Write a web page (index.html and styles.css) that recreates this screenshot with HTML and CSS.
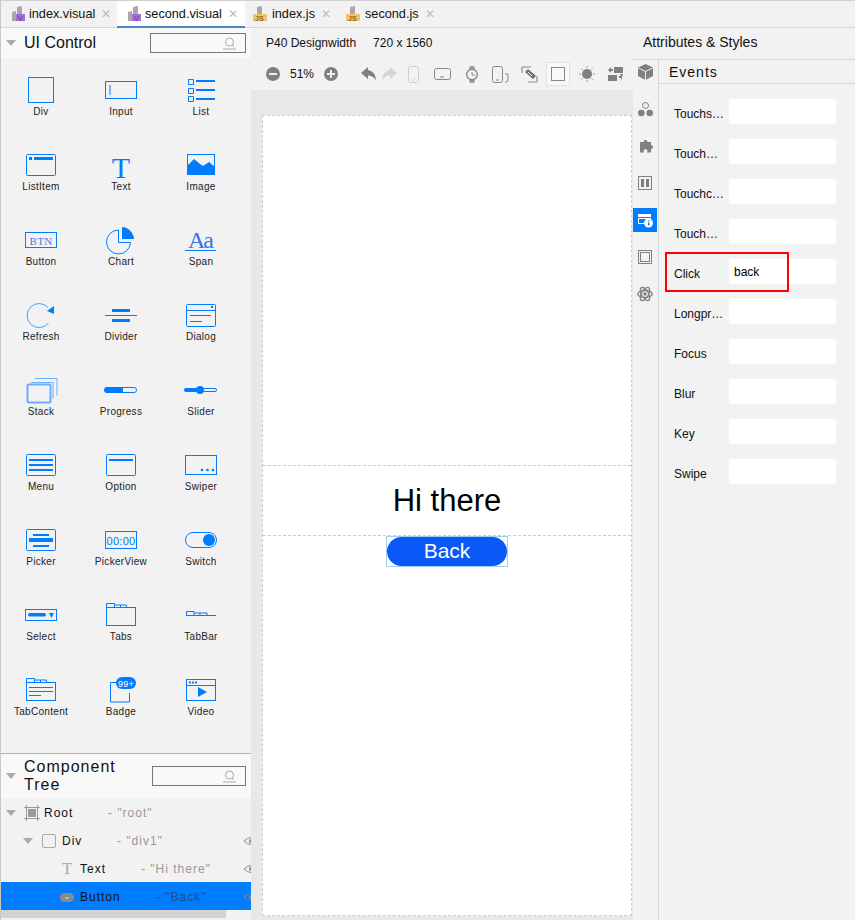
FILE: index.html
```html
<!DOCTYPE html>
<html lang="en">
<head>
  <meta charset="UTF-8" />
  <title>second.visual</title>
  <link rel="stylesheet" href="styles.css">
</head>
<body>

  <div class="tabs">
    <div class="tab tab-first">
      <svg class="file-icon" width="14" height="16" viewBox="0 0 14 16"><path d="M0 6l4-1v10H0zM5 1l5-1v8H5z" fill="#a8a8a8"/><rect y="8" x="4" width="9" height="7" fill="#a070d8"/><text x="6" y="14.500" class="file-v">V</text></svg>
      <span class="tab-name">index.visual</span><span class="tab-x">✕</span>
    </div>
    <div class="tab tab-active">
      <svg class="file-icon" width="14" height="16" viewBox="0 0 14 16"><path d="M0 6l4-1v10H0zM5 1l5-1v8H5z" fill="#a8a8a8"/><rect y="8" x="4" width="9" height="7" fill="#a070d8"/><text x="6" y="14.500" class="file-v">V</text></svg>
      <span class="tab-name">second.visual</span><span class="tab-x">✕</span>
    </div>
    <div class="tab tab-js">
      <svg class="file-icon" width="14" height="16" viewBox="0 0 14 16"><path d="M4 1l5-1v8H4z" fill="#a8a8a8"/><rect y="8" width="14" height="7" fill="#f0c46c"/><text x="2" y="14.500" class="file-js">JS</text></svg>
      <span class="tab-name">index.js</span><span class="tab-x">✕</span>
    </div>
    <div class="tab tab-js">
      <svg class="file-icon" width="14" height="16" viewBox="0 0 14 16"><path d="M4 1l5-1v8H4z" fill="#a8a8a8"/><rect y="8" width="14" height="7" fill="#f0c46c"/><text x="2" y="14.500" class="file-js">JS</text></svg>
      <span class="tab-name">second.js</span><span class="tab-x">✕</span>
    </div>
  </div>

  <div class="main">

    <!-- left side -->
    <div class="left">
      <div class="panel-head head-control">
        <span class="tri"></span>
        <span class="panel-title">UI Control</span>
        <div class="search search-wide">
          <svg width="14" height="13" viewBox="0 0 14 13"><circle cx="7.500" cy="5" r="4" fill="none" stroke="#aaa"/><path d="M10 8l2 2M1 12h13" stroke="#aaa"/></svg>
        </div>
      </div>

      <div class="palette">
        <div class="item">
          <svg viewBox="0 0 40 32"><rect x="7.500" y="3.500" width="25" height="25" class="ln"/></svg>
          <span>Div</span>
        </div>
        <div class="item">
          <svg viewBox="0 0 40 32"><rect x="4.500" y="7.500" width="31" height="17" class="ln"/><path d="M9 11v10" class="ln"/></svg>
          <span>Input</span>
        </div>
        <div class="item">
          <svg viewBox="0 0 40 32"><path d="M7.500 5.500h5v5h-5zM7.500 14.500h5v5h-5zM7.500 22.500h5v5h-5z" class="ln"/><path d="M15 7h19M15 16h19M15 25h19" class="ln2"/></svg>
          <span>List</span>
        </div>

        <div class="item">
          <svg viewBox="0 0 40 32"><rect x="5.500" y="5.500" width="29" height="21" rx="1" class="ln"/><path d="M8 8h3v3H8zM13 8h19v3H13z" class="fl"/></svg>
          <span>ListItem</span>
        </div>
        <div class="item">
          <svg viewBox="0 0 40 32"><text x="20" y="29" class="ic-t">T</text></svg>
          <span>Text</span>
        </div>
        <div class="item">
          <svg viewBox="0 0 40 32"><rect x="6.500" y="5.500" width="27" height="20" class="ln"/><path d="M6 25V17l7-7 6 5 3 2 6-4 6 5v7z" class="fl"/></svg>
          <span>Image</span>
        </div>

        <div class="item">
          <svg viewBox="0 0 40 32"><rect x="4.500" y="8.500" width="31" height="15" class="ln"/><text x="20" y="20.500" class="ic-btn">BTN</text></svg>
          <span>Button</span>
        </div>
        <div class="item">
          <svg viewBox="0 0 40 32"><path d="M17.500 6a12 12 0 1 0 12 12.500H17.500z" class="ln"/><path d="M21 3a13 13 0 0 1 12 12H21z" class="fl"/></svg>
          <span>Chart</span>
        </div>
        <div class="item">
          <svg viewBox="0 0 40 32"><text x="19" y="24" class="ic-aa">Aa</text><path d="M4 26.500h31" class="ln"/></svg>
          <span>Span</span>
        </div>

        <div class="item">
          <svg viewBox="0 0 40 32"><path d="M27 8.500A12 12 0 1 0 27.500 24" class="ln soft"/><path d="M26 12l7-5v8z" class="fl"/></svg>
          <span>Refresh</span>
        </div>
        <div class="item">
          <svg viewBox="0 0 40 32"><path d="M4 16.500h32" class="ln"/><path d="M11 10h18v3H11zM11 20h18v3H11z" class="fl"/></svg>
          <span>Divider</span>
        </div>
        <div class="item">
          <svg viewBox="0 0 40 32"><rect x="5.500" y="5.500" width="29" height="22" rx="1" class="ln"/><path d="M5 11.500h30M9 16.500h21M9 22.500h12" class="ln"/><rect x="30" y="7" width="2" height="2" class="fl"/></svg>
          <span>Dialog</span>
        </div>

        <div class="item">
          <svg viewBox="0 0 40 32"><rect x="6.500" y="10.500" width="23" height="18" rx="1" class="ln stack-a"/><path d="M10 8.500h22v16M14 4.500h22v17" class="ln stack-b"/></svg>
          <span>Stack</span>
        </div>
        <div class="item">
          <svg viewBox="0 0 40 32"><rect x="4.500" y="13.500" width="31" height="5" rx="2.500" class="ln"/><path d="M6 13h16v6H6a3 3 0 0 1 0-6z" class="fl"/></svg>
          <span>Progress</span>
        </div>
        <div class="item">
          <svg viewBox="0 0 40 32"><rect x="4.500" y="14.500" width="31" height="3" rx="1.500" class="ln"/><path d="M5 14h14v4H5a2 2 0 0 1 0-4z" class="fl"/><circle cx="19" cy="16" r="4" class="fl"/></svg>
          <span>Slider</span>
        </div>

        <div class="item">
          <svg viewBox="0 0 40 32"><rect x="5.500" y="5.500" width="29" height="21" rx="1" class="ln"/><path d="M8 11h24M8 16h24M8 21h24" class="ln2"/></svg>
          <span>Menu</span>
        </div>
        <div class="item">
          <svg viewBox="0 0 40 32"><rect x="5.500" y="5.500" width="29" height="21" rx="1" class="ln"/><path d="M8 11h24" class="ln2"/></svg>
          <span>Option</span>
        </div>
        <div class="item">
          <svg viewBox="0 0 40 32"><rect x="4.500" y="6.500" width="31" height="19" class="ln"/><circle cx="21" cy="21" r="1.300" class="fl"/><circle cx="26.500" cy="21" r="1.300" class="fl"/><circle cx="32" cy="21" r="1.300" class="fl"/></svg>
          <span>Swiper</span>
        </div>

        <div class="item">
          <svg viewBox="0 0 40 32"><rect x="5.500" y="5.500" width="29" height="21" rx="1" class="ln"/><path d="M12 10h16v2H12zM8 14h24v4H8zM12 21h16v2H12z" class="fl"/></svg>
          <span>Picker</span>
        </div>
        <div class="item">
          <svg viewBox="0 0 40 32"><rect x="4.500" y="7.500" width="31" height="17" class="ln"/><text x="20" y="20.500" class="ic-time">00:00</text></svg>
          <span>PickerView</span>
        </div>
        <div class="item">
          <svg viewBox="0 0 40 32"><rect x="4.500" y="8.500" width="31" height="15" rx="7.500" class="ln"/><circle cx="28" cy="16" r="6" class="fl"/></svg>
          <span>Switch</span>
        </div>

        <div class="item">
          <svg viewBox="0 0 40 32"><rect x="4.500" y="10.500" width="31" height="11" class="ln"/><rect x="7" y="14" width="18" height="3.500" rx="1.700" class="fl"/><path d="M28 14h5l-2.500 5z" class="fl"/></svg>
          <span>Select</span>
        </div>
        <div class="item">
          <svg viewBox="0 0 40 32"><rect x="5.500" y="8.500" width="29" height="18" class="ln"/><path d="M5.500 8V4.500h8V8M13.500 6h6v2.500M19.500 6h6v2.500" class="ln"/></svg>
          <span>Tabs</span>
        </div>
        <div class="item">
          <svg viewBox="0 0 40 32"><path d="M5.500 16.500v-4h7.500v4M13 14h6v2.500M19 14h7v2.500M5 16.500h30" class="ln"/></svg>
          <span>TabBar</span>
        </div>

        <div class="item">
          <svg viewBox="0 0 40 32"><rect x="5.500" y="8.500" width="29" height="18" class="ln"/><path d="M5.500 8V4.500h8V8M13.500 6h6v2.500M19.500 6h6v2.500M8 13.500h24M8 17.500h24M8 21.500h12" class="ln"/></svg>
          <span>TabContent</span>
        </div>
        <div class="item">
          <svg viewBox="0 0 40 32"><path d="M16 8.500h-6.500v19.500h19v-9" class="ln"/><rect x="15" y="3" width="20" height="12" rx="6" class="fl"/><text x="25" y="12.500" class="ic-badge">99+</text></svg>
          <span>Badge</span>
        </div>
        <div class="item">
          <svg viewBox="0 0 40 32"><rect x="5.500" y="5.500" width="29" height="21" class="ln"/><path d="M5 11.500h30" class="ln"/><path d="M8 7.500h2v2H8zM11 7.500h2v2h-2zM14 7.500h2v2h-2zM17 13l9 5-9 5z" class="fl"/></svg>
          <span>Video</span>
        </div>
      </div>

      <div class="panel-head head-tree">
        <span class="tri"></span>
        <span class="panel-title tree-title">Component Tree</span>
        <div class="search search-tree">
          <svg width="14" height="13" viewBox="0 0 14 13"><circle cx="7.500" cy="5" r="4" fill="none" stroke="#aaa"/><path d="M10 8l2 2M1 12h13" stroke="#aaa"/></svg>
        </div>
      </div>

      <div class="tree">
        <div class="row row-root">
          <span class="tri tri-small"></span>
          <svg class="row-icon" width="16" height="16" viewBox="0 0 16 16"><path d="M0 2.500h16M0 13.500h16M2.500 0v16M13.500 0v16" stroke="#999"/><rect x="4" y="4" width="8" height="8" fill="#999"/></svg>
          <span class="row-name">Root</span><span class="row-id">- "root"</span>
        </div>
        <div class="row row-div">
          <span class="tri tri-small"></span>
          <span class="check"></span>
          <span class="row-name">Div</span><span class="row-id">- "div1"</span>
          <svg class="eye" width="14" height="10" viewBox="0 0 14 10"><path d="M0 5q7-7 14 0q-7 7-14 0z" fill="none" stroke="#888"/><circle cx="7" cy="5" r="2" fill="#888"/></svg>
        </div>
        <div class="row row-text">
          <span class="t-icon">T</span>
          <span class="row-name">Text</span><span class="row-id">- "Hi there"</span>
          <svg class="eye" width="14" height="10" viewBox="0 0 14 10"><path d="M0 5q7-7 14 0q-7 7-14 0z" fill="none" stroke="#888"/><circle cx="7" cy="5" r="2" fill="#888"/></svg>
        </div>
        <div class="row row-button">
          <svg class="row-icon" width="14" height="9" viewBox="0 0 14 9"><rect width="14" height="9" rx="4.500" fill="#8a8a8a"/><path d="M5 4l2 2 2-2" fill="none" stroke="#ddd"/></svg>
          <span class="row-name">Button</span><span class="row-id">- "Back"</span>
          <svg class="eye" width="14" height="10" viewBox="0 0 14 10"><path d="M0 5q7-7 14 0q-7 7-14 0z" fill="none" stroke="#888"/><circle cx="7" cy="5" r="2" fill="#888"/></svg>
        </div>
        <div class="scrollbar"></div>
      </div>
    </div>

    <!-- middle -->
    <div class="center">
      <div class="device-bar">
        <span>P40 Designwidth</span>
        <span>720 x 1560</span>
      </div>
      <div class="tools">
        <svg class="zoom-btn" width="14" height="14" viewBox="0 0 14 14"><circle cx="7" cy="7" r="7" fill="#808080"/><path d="M3 7h8" stroke="#eee" stroke-width="2"/></svg>
        <span class="zoom-val">51%</span>
        <svg class="zoom-btn" width="14" height="14" viewBox="0 0 14 14"><circle cx="7" cy="7" r="7" fill="#808080"/><path d="M3 7h8M7 3v8" stroke="#eee" stroke-width="2"/></svg>
        <div class="tool tool-undo"><svg width="16" height="14" viewBox="0 0 16 14"><path d="M7 0L0 6l7 6V8.500q5 0 8 5q0-9-8-10.500z" fill="#808080"/></svg></div>
        <div class="tool tool-undo"><svg width="16" height="14" viewBox="0 0 16 14"><path d="M9 0l7 6-7 6V8.500q-5 0-8 5q0-9 8-10.500z" fill="#d4d4d4"/></svg></div>
        <div class="tool"><svg width="12" height="17" viewBox="0 0 12 17"><rect x=".5" y=".5" width="10" height="16" rx="2" fill="none" stroke="#cfcfcf"/><path d="M4 14h3" stroke="#cfcfcf"/></svg></div>
        <div class="tool"><svg width="17" height="12" viewBox="0 0 17 12"><rect x=".5" y=".5" width="16" height="11" rx="2" fill="none" stroke="#888"/><path d="M6 9h4" stroke="#888"/></svg></div>
        <div class="tool"><svg width="12" height="17" viewBox="0 0 12 17"><path d="M3 3l1-3h4l1 3M3 14l1 3h4l1-3" fill="#999"/><circle cx="6" cy="8.500" r="5.300" fill="none" stroke="#888" stroke-width="1.400"/><path d="M6 6v3h3" fill="none" stroke="#888"/></svg></div>
        <div class="tool"><svg width="17" height="17" viewBox="0 0 17 17"><rect x=".5" y=".5" width="10" height="16" rx="2" fill="none" stroke="#888"/><path d="M4 14h3M13 8h3v6q0 2-2 2h-1" fill="none" stroke="#888"/></svg></div>
        <div class="tool"><svg width="17" height="17" viewBox="0 0 17 17"><path d="M1 7V2q0-1 1-1h8M16 10v5q0 1-1 1H7" fill="none" stroke="#888" stroke-width="1.200"/><path d="M4 6l3-3 8 7-3 3z" fill="#707070"/><path d="M7 6l4 4" stroke="#eee"/></svg></div>
        <div class="tool tool-on"><span class="tool-square"></span></div>
        <div class="tool"><svg width="16" height="16" viewBox="0 0 16 16"><circle cx="8" cy="8" r="5" fill="#808080"/><path d="M8 0v2M8 14v2M0 8h2M14 8h2M2.300 2.300l1.400 1.400M12.300 12.300l1.400 1.400M2.300 13.700l1.400-1.400M12.300 3.700l1.400-1.400" stroke="#999"/></svg></div>
        <div class="tool"><svg width="16" height="15" viewBox="0 0 16 15"><path d="M6 0h9v6H6zM0 8h9v6H0z" fill="#808080"/><path d="M0 3l3-3v2h2v2H3v2zM15 7l-3 0 1 2h-2v2h2v3z" fill="#808080"/></svg></div>
      </div>
      <div class="canvas">
        <div class="phone">
          <div class="phone-top"></div>
          <div class="hello">Hi there</div>
          <div class="back-wrap"><div class="back-btn">Back</div></div>
        </div>
      </div>
    </div>

    <!-- right side -->
    <div class="right">
      <div class="right-head">Attributes &amp; Styles</div>
      <div class="right-body">
        <div class="rail">
          <div class="rail-item"><svg width="15" height="16" viewBox="0 0 15 16"><path d="M7.500 0L15 3.500V12l-7.500 4L0 12V3.500z" fill="#808080"/><path d="M.5 4l7 3.500 7-3.500M7.500 7.500V16" fill="none" stroke="#f2f2f2"/></svg></div>
          <div class="rail-item"><svg width="15" height="15" viewBox="0 0 15 15"><circle cx="7.500" cy="3.500" r="3" fill="none" stroke="#808080"/><circle cx="3.300" cy="11" r="3.300" fill="#808080"/><circle cx="11.700" cy="11" r="3.300" fill="#808080"/></svg></div>
          <div class="rail-item rail-puzzle"><svg width="15" height="15" viewBox="0 0 15 15"><path d="M2 4h3.500a2 2 0 1 1 4 0H13v3a2 2 0 1 1 0 4v3.500H9a2 2 0 1 0-3 0H2z" fill="#808080"/></svg></div>
          <div class="rail-item"><svg width="14" height="14" viewBox="0 0 14 14"><rect x=".5" y=".5" width="13" height="13" fill="none" stroke="#808080"/><path d="M3 3h3v8H3zM8 3h3v8H8z" fill="#808080"/></svg></div>
          <div class="rail-item rail-on"><svg width="16" height="15" viewBox="0 0 16 15"><path d="M1 1h13v3H1zM1 5h13v1H1zM1 6h1v4h7v1H1zM13 6h1v1h-1z" fill="#fff"/><circle cx="11.500" cy="10" r="4.500" fill="#fff"/><path d="M11 7.500h1.500v1H11zM11 9.500h1.500v3H11z" fill="#007dff"/></svg></div>
          <div class="rail-item"><svg width="14" height="14" viewBox="0 0 14 14"><rect x=".5" y=".5" width="13" height="13" fill="none" stroke="#808080"/><rect x="2.500" y="2.500" width="9" height="9" fill="none" stroke="#808080"/></svg></div>
          <div class="rail-item"><svg width="16" height="16" viewBox="0 0 16 16"><g fill="none" stroke="#808080" stroke-width="1.300"><ellipse cx="8" cy="8" rx="7.300" ry="3.500"/><ellipse cx="8" cy="8" rx="7.300" ry="3.500" transform="rotate(60 8 8)"/><ellipse cx="8" cy="8" rx="7.300" ry="3.500" transform="rotate(120 8 8)"/></g><circle cx="8" cy="8" r="1.800" fill="#808080"/></svg></div>
        </div>
        <div class="events">
          <div class="events-title">Events</div>
          <div class="event-list">
            <div class="event"><label>Touchs…</label><div class="field"></div></div>
            <div class="event"><label>Touch…</label><div class="field"></div></div>
            <div class="event"><label>Touchc…</label><div class="field"></div></div>
            <div class="event"><label>Touch…</label><div class="field"></div></div>
            <div class="event event-marked"><label>Click</label><div class="field">back</div><div class="red-box"></div></div>
            <div class="event"><label>Longpr…</label><div class="field"></div></div>
            <div class="event"><label>Focus</label><div class="field"></div></div>
            <div class="event"><label>Blur</label><div class="field"></div></div>
            <div class="event"><label>Key</label><div class="field"></div></div>
            <div class="event"><label>Swipe</label><div class="field"></div></div>
          </div>
        </div>
      </div>
    </div>

  </div>

</body>
</html>
```

FILE: styles.css
```css
* {
  box-sizing: border-box;
}

body {
  margin: 0;
  width: 855px;
  height: 920px;
  overflow: hidden;
  font-family: "Liberation Sans", Arial, sans-serif;
  background: #f2f2f2;
  color: #111;
  border-left: 1px solid #c8c8c8;
}

/* file tabs */
.tabs {
  display: flex;
  height: 28px;
  border-top: 1px solid #d0d0d0;
  border-bottom: 1px solid #d4d4d4;
}

.tab {
  display: flex;
  align-items: center;
  height: 26px;
  font-size: 12.7px;
  padding-left: 11px;
}

.tab-first {
  width: 116px;
}

.tab-active {
  width: 128px;
  height: 27px;
  background: #fff;
  border-bottom: 2px solid #4a86c8;
}

.tab-js {
  width: 93px;
  padding-left: 8px;
}

.tab-js + .tab-js {
  width: 110px;
}

.file-icon {
  margin-right: 3px;
  flex: none;
}

.tab-js .file-icon {
  margin-right: 5px;
}

.file-v {
  font-size: 7px;
  fill: #5a3a90;
}

.file-js {
  font-size: 7px;
  font-weight: bold;
  fill: #8a6a20;
}

.tab-x {
  margin-left: 6px;
  font-size: 12px;
  color: #bbb;
}

.main {
  display: flex;
  height: 892px;
}

/* left side */
.left {
  width: 250px;
  flex: none;
  overflow: hidden;
}

.panel-head {
  display: flex;
  align-items: center;
  background: #f9f9f9;
}

.head-control {
  height: 30px;
  padding-left: 5px;
}

.head-tree {
  height: 45px;
  padding-left: 5px;
  border-top: 1px solid #b4b4b4;
}

.tri {
  width: 0;
  height: 0;
  flex: none;
  border-left: 5px solid transparent;
  border-right: 5px solid transparent;
  border-top: 6px solid #aaa;
  margin-right: 8px;
}

.panel-title {
  font-size: 16px;
  width: 126px;
  flex: none;
}

.tree-title {
  width: 128px;
  padding-right: 7px;
  font-size: 16px;
  line-height: 18px;
  letter-spacing: 1px;
}

.search {
  height: 20px;
  border: 1px solid #777;
  display: flex;
  align-items: center;
  justify-content: flex-end;
  padding-right: 9px;
}

.search-wide {
  width: 96px;
}

.search-tree {
  width: 94px;
}

.palette {
  display: grid;
  grid-template-columns: repeat(3, 80px);
  grid-auto-rows: 75px;
  height: 695px;
  background: #f2f2f2;
}

.item {
  display: flex;
  flex-direction: column;
  align-items: center;
  padding-top: 16px;
  font-size: 10px;
  letter-spacing: .3px;
  color: #222;
}

.item svg {
  width: 40px;
  height: 32px;
  flex: none;
  overflow: visible;
}

.item span {
  line-height: 12px;
}

.ln {
  fill: none;
  stroke: #007dff;
  stroke-width: 1;
}

.ln2 {
  fill: none;
  stroke: #007dff;
  stroke-width: 2;
}

.fl {
  fill: #007dff;
}

.soft {
  opacity: .7;
}

.stack-a {
  stroke: #6aaeff;
  stroke-width: 2;
}

.stack-b {
  stroke: #6aaeff;
}

.ic-t {
  font-family: "Liberation Serif", serif;
  font-size: 30px;
  text-anchor: middle;
  fill: #007dff;
}

.ic-btn {
  font-family: "Liberation Serif", serif;
  font-size: 11px;
  text-anchor: middle;
  fill: #5a70f0;
}

.ic-aa {
  font-family: "Liberation Serif", serif;
  font-size: 24px;
  letter-spacing: -2px;
  text-anchor: middle;
  fill: #3a70f0;
}

.ic-time {
  font-size: 11px;
  text-anchor: middle;
  fill: #007dff;
}

.ic-badge {
  font-size: 9px;
  text-anchor: middle;
  fill: #fff;
}

/* component tree */
.tree {
  height: 122px;
  background: #f2f2f2;
}

.row {
  position: relative;
  display: flex;
  align-items: center;
  height: 28px;
  padding-top: 2px;
  font-size: 12px;
  letter-spacing: 1px;
  white-space: nowrap;
}

.row-id {
  color: #999;
}

.row-root {
  padding-left: 5px;
}

.row-root .tri-small {
  margin-right: 8px;
}

.row-root .row-icon {
  margin-right: 4px;
}

.row-root .row-name {
  width: 64px;
}

.row-div {
  padding-left: 22px;
}

.row-div .tri-small {
  margin-right: 9px;
}

.row-div .row-name {
  width: 55px;
}

.check {
  width: 14px;
  height: 14px;
  border: 1px solid #aaa;
  border-radius: 2px;
  margin-right: 6px;
  flex: none;
}

.row-text {
  padding-left: 61px;
}

.t-icon {
  font-family: "Liberation Serif", serif;
  font-size: 17px;
  color: #aaa;
  width: 18px;
  letter-spacing: 0;
}

.row-text .row-name {
  width: 61px;
}

.row-button {
  padding-left: 59px;
  background: #007dff;
}

.row-button .row-icon {
  margin-right: 6px;
}

.row-button .row-name {
  width: 76px;
}

.row-button .row-id {
  color: #1c4f96;
}

.eye {
  position: absolute;
  left: 243px;
  top: 10px;
}

.scrollbar {
  width: 225px;
  height: 8px;
  background: #d3d3d3;
}

/* middle */
.center {
  width: 382px;
  flex: none;
  display: flex;
  flex-direction: column;
}

.device-bar {
  display: flex;
  gap: 17px;
  height: 30px;
  align-items: center;
  padding-left: 15px;
  font-size: 12px;
}

.tools {
  display: flex;
  align-items: center;
  height: 32px;
  padding-left: 15px;
}

.zoom-btn {
  flex: none;
}

.zoom-val {
  width: 44px;
  flex: none;
  text-align: center;
  font-size: 12px;
}

.tool {
  width: 29px;
  height: 24px;
  flex: none;
  display: flex;
  align-items: center;
  justify-content: center;
}

.tool-undo {
  width: 20px;
}

.tool-undo:first-of-type {
  margin-left: 21px;
}

.tool-on {
  width: 24px;
  margin: 0 2px;
  background: #f8f8f8;
  border: 1px solid #e2e2e2;
}

.tool-square {
  width: 14px;
  height: 14px;
  border: 1px solid #888;
}

.canvas {
  flex: 1;
  background: #e8e8e9;
  padding: 25px 0 0 11px;
}

.phone {
  width: 370px;
  height: 801px;
  background: #fff;
  border: 1px dashed #ccc;
}

.phone-top {
  height: 349px;
}

.hello {
  height: 71px;
  border-top: 1px dashed #ccc;
  border-bottom: 1px dashed #ccc;
  display: flex;
  align-items: center;
  justify-content: center;
  font-size: 31px;
  color: #000;
}

.back-wrap {
  width: 122px;
  height: 31px;
  margin: 0 auto;
  border: 1px solid #a0cdf0;
}

.back-btn {
  height: 29px;
  background: #0a59f7;
  border-radius: 15px;
  color: #fff;
  font-size: 21px;
  line-height: 28px;
  text-align: center;
}

/* right side */
.right {
  width: 222px;
  flex: none;
}

.right-head {
  height: 32px;
  padding: 6px 0 0 10px;
  font-size: 14px;
  line-height: 17px;
  border-bottom: 1px solid #d4d4d4;
}

.right-body {
  display: flex;
  height: 860px;
}

.rail {
  width: 26px;
  flex: none;
  border-right: 1px solid #d4d4d4;
}

.rail-item {
  width: 24px;
  height: 24px;
  margin-bottom: 13px;
  display: flex;
  align-items: center;
  justify-content: center;
}

.rail-puzzle {
  margin-top: -1px;
  margin-bottom: 14px;
}

.rail-on {
  background: #007dff;
}

.events {
  flex: 1;
}

.events-title {
  height: 24px;
  padding-left: 10px;
  line-height: 25px;
  font-size: 14px;
  letter-spacing: 1px;
  border-bottom: 1px solid #d4d4d4;
}

.event-list {
  padding-top: 15px;
}

.event {
  position: relative;
  display: flex;
  height: 25px;
  margin-bottom: 15px;
  padding-left: 15px;
  font-size: 12px;
  line-height: 31px;
}

.event label {
  width: 55px;
  flex: none;
}

.field {
  width: 107px;
  height: 25px;
  background: #fff;
  border-radius: 2px;
  padding-left: 5px;
  line-height: 26px;
  color: #000;
}

.red-box {
  position: absolute;
  left: 6px;
  top: -7px;
  width: 124px;
  height: 40px;
  border: 2px solid #f00;
}
```
